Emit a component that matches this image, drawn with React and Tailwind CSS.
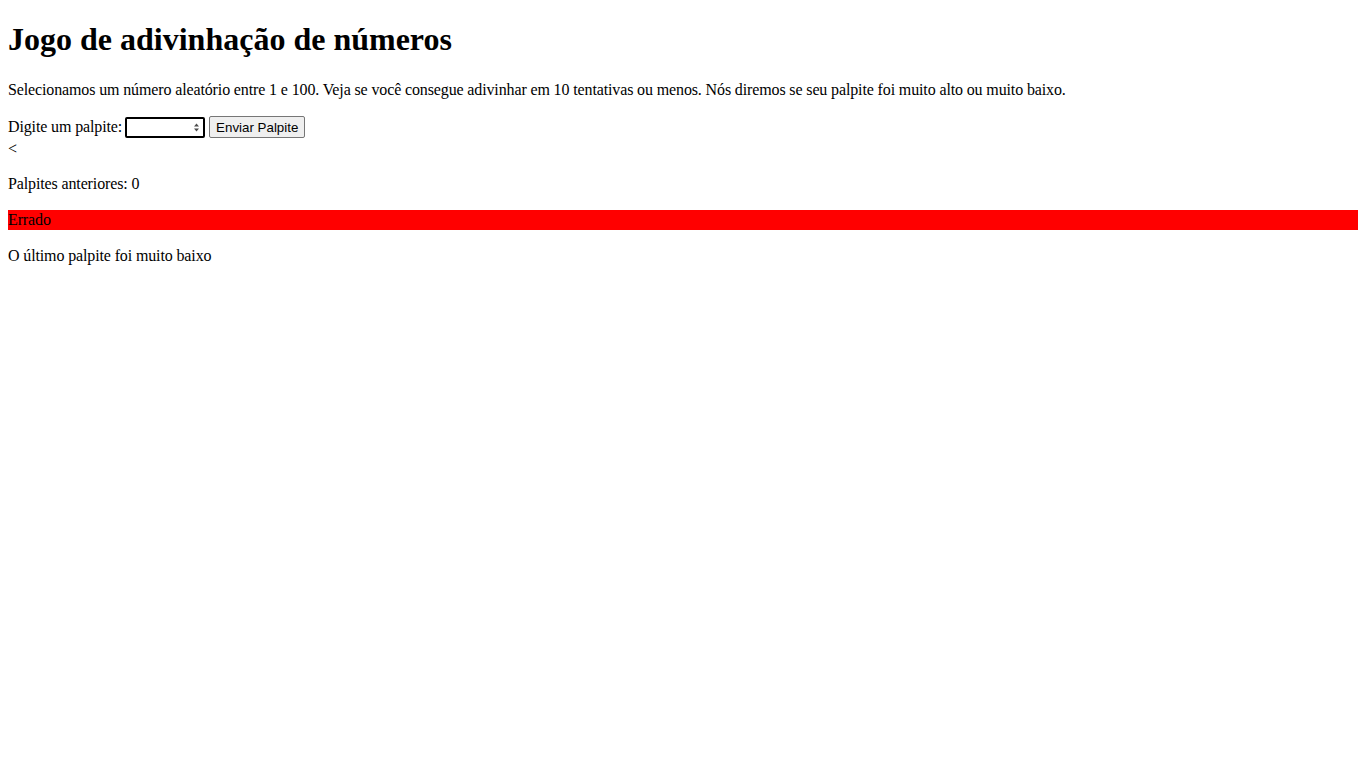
import React from 'react';

export default function App() {
  return (
    <div className="min-h-screen bg-white px-2 text-black font-['Liberation_Serif',serif] text-base">
      <h1 className="text-[32px] font-bold leading-[normal] mt-[21.44px] mb-[22.4px]">Jogo de adivinhação de números</h1>

      <div className="tracking-[-0.13px]">
        <p className="leading-[normal] my-4">
          Selecionamos um número aleatório entre 1 e 100. Veja se você consegue adivinhar em 10 tentativas ou menos. Nós diremos se seu palpite foi muito alto ou muito baixo.
        </p>

        {/* formulário */}
        <div className="flex items-center h-[25px] leading-[normal]">
          <label htmlFor="guessField">Digite um palpite:</label>
          <span className="ml-[3px] flex items-center w-[80px] h-[21px] border-2 border-black rounded-[2px] bg-white">
            <input id="guessField" type="text" className="w-full min-w-0 h-full px-[2px] outline-none tracking-normal text-[13.33px] font-['Liberation_Sans',sans-serif]" />
            <svg className="w-[7px] h-[9px] mr-[3px] shrink-0" viewBox="0 0 7 9" fill="#4d4d4d">
              <path d="M3.5 0.5L6 3.5H1z" />
              <path d="M3.5 8.5L6 5.5H1z" />
            </svg>
          </span>
          <button className="ml-1 h-[22px] px-[6px] bg-[#efefef] border border-[#767676] rounded-[2px] tracking-normal text-[13.33px] font-['Liberation_Sans',sans-serif] leading-none">
            Enviar Palpite
          </button>
        </div>
        <div className="leading-[18px]">{'<'}</div>

        <div>
          <p className="leading-5 my-4">Palpites anteriores: 0</p>
          <p className="leading-5 my-4 bg-[#ff0000]">Errado</p>
          <p className="leading-5 my-4">O último palpite foi muito baixo</p>
        </div>
      </div>
    </div>
  );
}
